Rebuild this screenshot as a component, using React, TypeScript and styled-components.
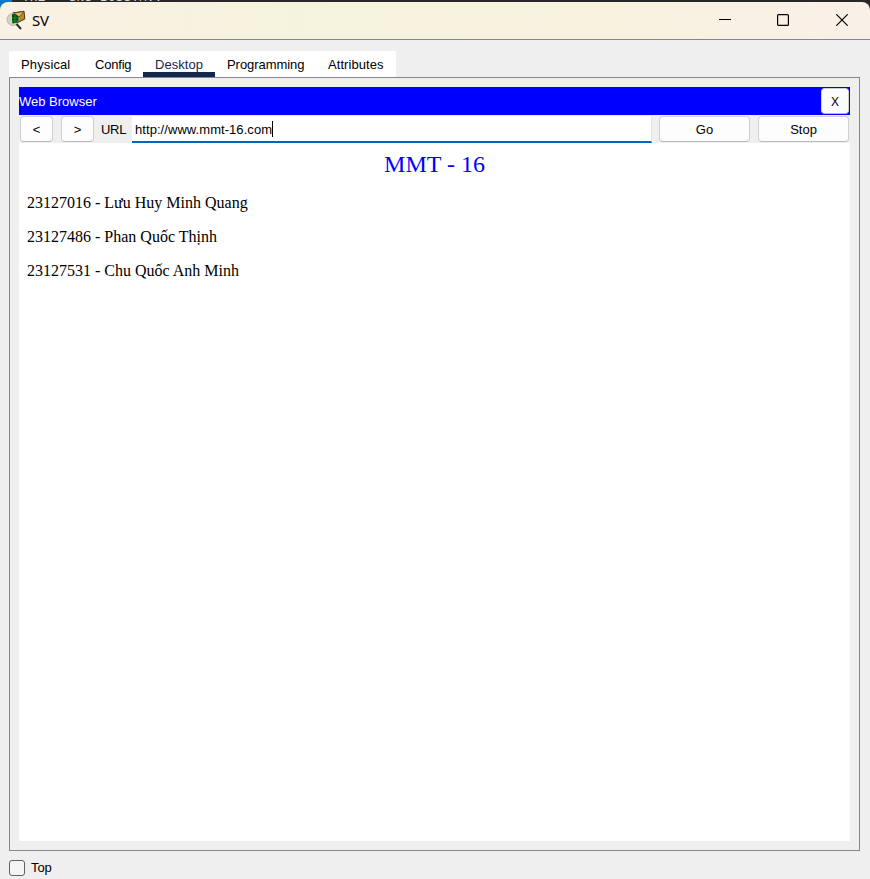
import React from "react";
import styled, { createGlobalStyle } from "styled-components";

const GlobalStyle = createGlobalStyle`
  * { box-sizing: border-box; }
  body { margin: 0; background: #efefef; }
`;

const Desktop = styled.div`
  width: 870px;
  height: 879px;
  overflow: hidden;
  display: flex;
  flex-direction: column;
  background: #efefef;
  font: 13px/16px "Liberation Sans", Arial, sans-serif;
  color: #000;
  white-space: nowrap;
`;

const Backdrop = styled.div`
  height: 40px;
  flex: none;
  padding-top: 2px;
  background: linear-gradient(90deg, #0a78c2 12px, #2a2728 12px);
  position: relative;
`;

const BackdropText = styled.div`
  position: absolute;
  left: 22px;
  top: 0;
  height: 2px;
  width: 140px;
  overflow: hidden;
  color: #d8d8d8;
  font: 13px/16px "Liberation Mono", monospace;

  span {
    display: block;
    margin-top: -10px;
  }
`;

const TitleBar = styled.header`
  height: 38px;
  display: flex;
  align-items: center;
  padding-left: 6px;
  border-bottom: 1px solid #828790;
  border-radius: 8px 8px 0 0;
  background: linear-gradient(90deg, #faf1e4 0, #f9f1e2 90px, #f5f3dd 290px, #f8f2df 620px, #faf0e7 830px, #f9f0e8 100%);
`;

const WindowTitle = styled.span`
  flex: 1;
  padding: 0 0 2px 5px;
  font: 15px/20px "Noto Sans", "Open Sans", sans-serif;
  letter-spacing: -0.3px;
`;

const Caption = styled.span`
  width: 58.5px;
  display: flex;
  justify-content: center;
  padding-bottom: 1px;
  position: relative;
  left: 1px;
`;

const Tabs = styled.nav`
  margin: 11px 0 0 9px;
  display: flex;
  height: 26px;
  flex: none;
`;

const Tab = styled.div<{ $width: number; $spacing: number; $active?: boolean }>`
  width: ${(p) => p.$width}px;
  padding: 6px 0 0 12px;
  letter-spacing: ${(p) => p.$spacing}px;
  background: #fff;
  color: ${(p) => (p.$active ? "#15284b" : "#000")};
  border-bottom: ${(p) => (p.$active ? "5px solid #11284b" : "0")};
`;

const Frame = styled.main`
  margin: 0 10px 0 9px;
  height: 774px;
  flex: none;
  padding: 9px;
  border: 1px solid #828790;
  display: flex;
  flex-direction: column;
`;

const BrowserHeader = styled.div`
  height: 28px;
  display: flex;
  align-items: center;
  justify-content: space-between;
  padding-right: 1px;
  background: #0000ff;
  color: #fff;
`;

const HeaderTitle = styled.span`
  padding-top: 2px;
`;

const Button = styled.button<{ $width: number; $narrow?: boolean }>`
  width: ${(p) => p.$width}px;
  height: 26px;
  flex: none;
  padding: 1px 0 0;
  border: 1px solid #d0d0d0;
  border-bottom-color: #bababa;
  border-radius: 4px;
  background: #fdfdfd;
  color: #000;
  font: inherit;
  font-size: ${(p) => (p.$narrow ? 12 : 13)}px;
`;

const Toolbar = styled.div`
  height: 28px;
  display: flex;
  align-items: center;
  padding: 0 1px;
`;

const Back = styled(Button)`
  margin-right: 8px;
`;

const UrlLabel = styled.span`
  width: 38px;
  padding: 2px 0 0 7px;
  letter-spacing: -0.3px;
`;

const UrlField = styled.div`
  width: 520px;
  height: 28px;
  display: flex;
  align-items: center;
  padding: 2px 0 0 3px;
  margin-right: 7px;
  background: #fff;
  border-top: 1px solid #e8e8e8;
  border-right: 1px solid #e3e3e3;
  border-bottom: 2px solid #0067c0;
  letter-spacing: 0.06px;
`;

const Caret = styled.span`
  width: 1px;
  height: 16px;
  margin-top: -1px;
  background: #000;
`;

const Page = styled.article`
  flex: 1;
  padding: 8px;
  background: #fff;
  font: 16px/18px "Liberation Serif", "Times New Roman", serif;
`;

const Heading = styled.h1`
  margin: 0 0 16px;
  text-align: center;
  font-size: 24px;
  line-height: 27px;
  font-weight: 400;
  color: #0000ff;
`;

const Member = styled.p`
  margin: 0 0 16px;
`;

const Footer = styled.label`
  display: flex;
  align-items: center;
  gap: 6px;
  padding: 8px 0 0 9px;
`;

const Checkbox = styled.span`
  width: 16px;
  height: 16px;
  border: 1px solid #626262;
  border-radius: 3px;
  background: #f5f5f5;
`;

const FooterText = styled.span`
  padding-top: 1px;
  letter-spacing: -0.1px;
`;

const AppIcon = () => (
  <svg width="21" height="22" viewBox="0 0 21 22">
    <path d="M6.5 3 18 1.2 18.8 9 12 12.5Z" fill="#b98529" stroke="#4a3a18" />
    <path d="M7 3.2 18 1.6 13 7Z" fill="#e4bd63" stroke="#5c431b" strokeWidth=".8" />
    <circle cx="7" cy="9.5" r="6" fill="#d3d3cc" stroke="#aaaba5" strokeWidth=".8" />
    <path d="M6 4.5 8.5 3.5l4 2.5v6.5l-6 1-.5-3Z" fill="#0a4a0c" />
    <path d="M6 8h6.500M6 11h6.500M9 5v8" stroke="#1c9825" strokeWidth=".8" />
    <path d="M10.500 14 15 19" stroke="#2b2b2b" strokeWidth="2" />
  </svg>
);

const MEMBERS = [
  "23127016 - Lưu Huy Minh Quang",
  "23127486 - Phan Quốc Thịnh",
  "23127531 - Chu Quốc Anh Minh",
];

const TABS = [
  { name: "Physical", width: 74, spacing: 0.12 },
  { name: "Config", width: 60, spacing: -0.2 },
  { name: "Desktop", width: 72, spacing: 0.05 },
  { name: "Programming", width: 101, spacing: -0.06 },
  { name: "Attributes", width: 80, spacing: 0.06 },
];

export default function App() {
  return (
    <Desktop>
      <GlobalStyle />
      <Backdrop>
        <BackdropText aria-hidden="true"><span>THE - SNS BOSSTM...</span></BackdropText>
        <TitleBar>
          <AppIcon />
          <WindowTitle>SV</WindowTitle>
          <Caption>
            <svg width="12" height="12" viewBox="0 0 12 12"><path d="M0 5.5h12" stroke="#000" /></svg>
          </Caption>
          <Caption>
            <svg width="12" height="12" viewBox="0 0 12 12"><rect x=".6" y=".6" width="10.8" height="10.8" rx="1" fill="none" stroke="#000" strokeWidth="1.2" /></svg>
          </Caption>
          <Caption>
            <svg width="12" height="12" viewBox="0 0 12 12"><path d="m.3.3 11.4 11.4m0-11.4L.3 11.7" stroke="#000" strokeWidth="1.2" /></svg>
          </Caption>
        </TitleBar>
      </Backdrop>
      <Tabs>
        {TABS.map((t) => (
          <Tab key={t.name} $width={t.width} $spacing={t.spacing} $active={t.name === "Desktop"}>{t.name}</Tab>
        ))}
      </Tabs>
      <Frame>
        <BrowserHeader>
          <HeaderTitle>Web Browser</HeaderTitle>
          <Button $width={28} $narrow>X</Button>
        </BrowserHeader>
        <Toolbar>
          <Back $width={33}>&lt;</Back>
          <Button $width={33}>&gt;</Button>
          <UrlLabel>URL</UrlLabel>
          <UrlField>http://www.mmt-16.com<Caret /></UrlField>
          <Back $width={91}>Go</Back>
          <Button $width={91}>Stop</Button>
        </Toolbar>
        <Page>
          <Heading>MMT - 16</Heading>
          {MEMBERS.map((m) => <Member key={m}>{m}</Member>)}
        </Page>
      </Frame>
      <Footer>
        <Checkbox />
        <FooterText>Top</FooterText>
      </Footer>
    </Desktop>
  );
}
